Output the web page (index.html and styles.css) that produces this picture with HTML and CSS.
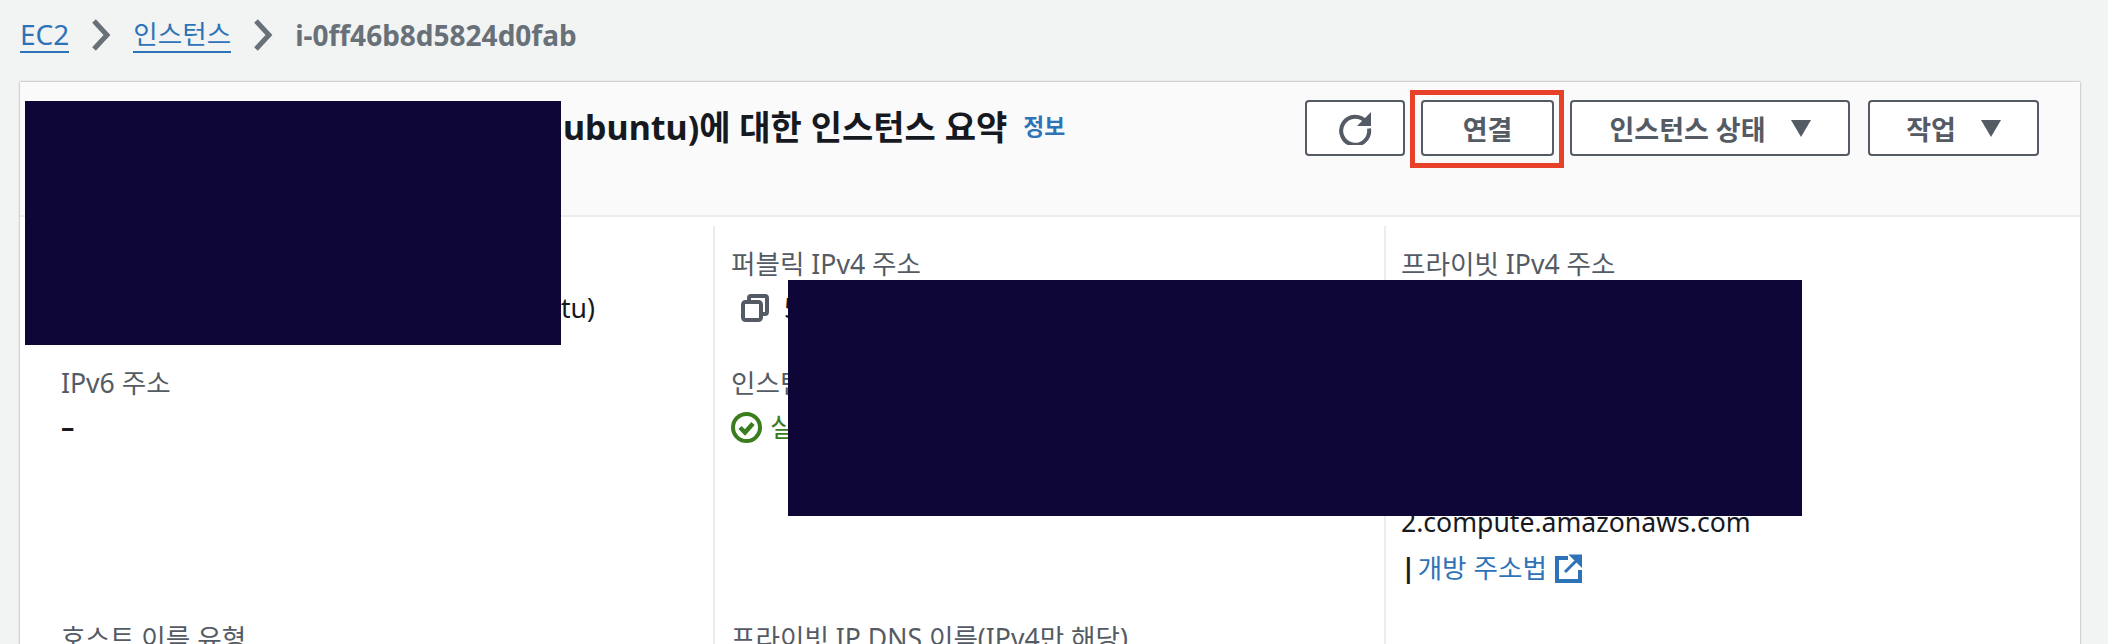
FILE: index.html
```html
<!DOCTYPE html>
<html lang="ko">
<head>
    <meta charset="UTF-8">
    <meta name="viewport" content="width=device-width, initial-scale=1.0">
    <title>인스턴스 요약</title>
    <link rel="stylesheet" href="styles.css">
</head>
<body>
    <nav class="breadcrumb">
        <a class="crumb-root" href="#">EC2</a>
        <svg class="crumb-sep" width="20" height="32" viewBox="0 0 20 32"><path d="M3 2l13 14L3 30" fill="none" stroke="#687078" stroke-width="5"/></svg>
        <a href="#">인스턴스</a>
        <svg class="crumb-sep" width="20" height="32" viewBox="0 0 20 32"><path d="M3 2l13 14L3 30" fill="none" stroke="#687078" stroke-width="5"/></svg>
        <span class="crumb-current">i-0ff46b8d5824d0fab</span>
    </nav>

    <div class="panel">
        <div class="panel-header">
            <div class="panel-title">
                <h1>ubuntu)에 대한 인스턴스 요약</h1>
                <a class="info-link" href="#">정보</a>
            </div>
            <div class="actions">
                <button class="btn btn-icon" aria-label="새로 고침">
                    <svg width="34" height="34" viewBox="0 0 34 34">
                        <path d="M28.5 11.5A14 14 0 1 0 31 17.5" fill="none" stroke="#545b64" stroke-width="4"/>
                        <path d="M33 1v14H19z" fill="#545b64"/>
                    </svg>
                </button>
                <button class="btn btn-connect">연결<span class="highlight"></span></button>
                <button class="btn btn-state">인스턴스 상태<span class="caret"></span></button>
                <button class="btn btn-action">작업<span class="caret"></span></button>
            </div>
        </div>

        <div class="panel-body">
            <div class="cell">
                <div class="label">&nbsp;</div>
                <div class="value value-tail">tu)</div>
            </div>
            <div class="cell">
                <div class="label">퍼블릭 IPv4 주소</div>
                <div class="value value-copy">
                    <svg width="28" height="28" viewBox="0 0 28 28">
                        <path d="M8 7V4a2 2 0 0 1 2-2h14a2 2 0 0 1 2 2v14a2 2 0 0 1-2 2h-3" fill="none" stroke="#545b64" stroke-width="4"/>
                        <rect x="2" y="8" width="18" height="18" rx="2.5" fill="none" stroke="#545b64" stroke-width="4"/>
                    </svg>
                    <span>5</span>
                </div>
            </div>
            <div class="cell">
                <div class="label">프라이빗 IPv4 주소</div>
            </div>

            <div class="cell">
                <div class="label">IPv6 주소</div>
                <div class="value value-dash">–</div>
            </div>
            <div class="cell">
                <div class="label">인스턴스 상태</div>
                <div class="value value-status">
                    <svg width="31" height="31" viewBox="0 0 31 31">
                        <circle cx="15.5" cy="15.5" r="13.5" fill="none" stroke="#3a7d1e" stroke-width="4"/>
                        <path d="M9 15.5l5 5 8-9" fill="none" stroke="#3a7d1e" stroke-width="4.5"/>
                    </svg>
                    <span>실행 중</span>
                </div>
            </div>
            <div class="cell">
                <div class="value value-dns">2.compute.amazonaws.com</div>
                <div class="value value-link">
                    <span class="pipe">|</span>
                    <a href="#">개방 주소법</a>
                    <svg class="external-icon" width="27" height="29" viewBox="0 0 27 29">
                        <path d="M13 4H2v23h23V16" fill="none" stroke="#2e73b8" stroke-width="4"/>
                        <path d="M17 2h9v9zM22 6L10 18" fill="#2e73b8" stroke="#2e73b8" stroke-width="3"/>
                    </svg>
                </div>
            </div>

            <div class="cell">
                <div class="label">호스트 이름 유형</div>
            </div>
            <div class="cell">
                <div class="label">프라이빗 IP DNS 이름(IPv4만 해당)</div>
            </div>
            <div class="cell"></div>
        </div>
    </div>

    <!-- masked parts of the screenshot -->
    <div class="mask mask-title"></div>
    <div class="mask mask-values"></div>
</body>
</html>
```

FILE: styles.css
```css
/* Page */
html, body {
    height: 100%;
}

body {
    margin: 0;
    position: relative;
    overflow: hidden;
    background-color: #f2f3f3;
    color: #16191f;
    font-family: "Noto Sans", "Noto Sans CJK KR", sans-serif;
    font-size: 26.6px;
    line-height: 32px;
}

a {
    color: #2e73b8;
    text-decoration: none;
}

/* Breadcrumb */
.breadcrumb {
    display: flex;
    align-items: center;
    gap: 22px;
    height: 70px;
    padding-left: 20px;
}

.breadcrumb a {
    border-bottom: 2px solid #2e73b8;
    line-height: 34px;
}

.crumb-root {
    font-size: 28px;
}

.crumb-sep {
    flex: none;
}

.crumb-current {
    color: #687078;
    font-size: 28px;
    font-weight: 700;
}

/* Panel */
.panel {
    margin: 12px 28px 0 20px;
    background-color: #fff;
    box-shadow: 0 0 2px rgba(0, 28, 36, 0.45);
}

.panel-header {
    display: flex;
    justify-content: space-between;
    box-sizing: border-box;
    height: 135px;
    padding: 18px 41px 0 543px;
    background-color: #fafafa;
    border-bottom: 2px solid #eaeded;
}

.panel-title {
    display: flex;
    align-items: center;
    gap: 16px;
    height: 50px;
    margin-top: 2px;
}

.panel-title h1 {
    margin: 0;
    font-size: 34px;
    line-height: 40px;
    font-weight: 700;
}

.info-link {
    font-size: 22.8px;
    font-weight: 700;
}

.actions {
    display: flex;
    gap: 16px;
}

.btn {
    position: relative;
    display: flex;
    align-items: center;
    justify-content: center;
    gap: 25px;
    box-sizing: border-box;
    height: 56px;
    padding: 0;
    background-color: #fff;
    border: 2px solid #545b64;
    border-radius: 4px;
    color: #545b64;
    font-family: inherit;
    font-size: 27px;
    font-weight: 700;
}

.btn-icon {
    width: 100px;
}

.btn-connect {
    width: 133px;
}

.btn-state {
    width: 280px;
}

.btn-action {
    width: 171px;
    margin-left: 2px;
}

.caret {
    width: 0;
    height: 0;
    border-left: 10px solid transparent;
    border-right: 10px solid transparent;
    border-top: 17px solid #545b64;
}

.highlight {
    position: absolute;
    top: -12px;
    left: -13px;
    right: -12px;
    bottom: -14px;
    border: 5px solid #e8412a;
}

/* Details */
.panel-body {
    display: grid;
    grid-template-columns: 693px 671px 1fr;
    grid-template-rows: 119px 255px 200px;
    padding-top: 9px;
}

.cell {
    box-sizing: border-box;
    padding: 22px 15px 0 16px;
}

.cell:nth-child(3n) {
    padding-left: 15px;
}

.cell:nth-child(3n+1) {
    padding-left: 41px;
}

.cell:not(:nth-child(3n+1)) {
    border-left: 2px solid #eaeded;
}

.label {
    color: #545b64;
}

.value {
    margin-top: 12px;
}

.value-tail {
    padding-left: 500px;
}

.value-copy {
    display: flex;
    align-items: center;
    gap: 15px;
    padding-left: 10px;
}

.value-dash {
    font-weight: 700;
}

.value-status {
    display: flex;
    align-items: center;
    gap: 8px;
    color: #3a7d1e;
}

.value-dns {
    margin-top: 139px;
}

.value-link {
    display: flex;
    align-items: center;
    gap: 2px;
    margin-top: 14px;
}

.pipe {
    font-weight: 700;
}

.external-icon {
    margin-left: 6px;
}

/* Masks lie over the text */
.mask {
    position: absolute;
    background-color: #0e0637;
}

.mask-title {
    top: 101px;
    left: 25px;
    width: 536px;
    height: 244px;
}

.mask-values {
    top: 280px;
    left: 788px;
    width: 1014px;
    height: 236px;
}
```
